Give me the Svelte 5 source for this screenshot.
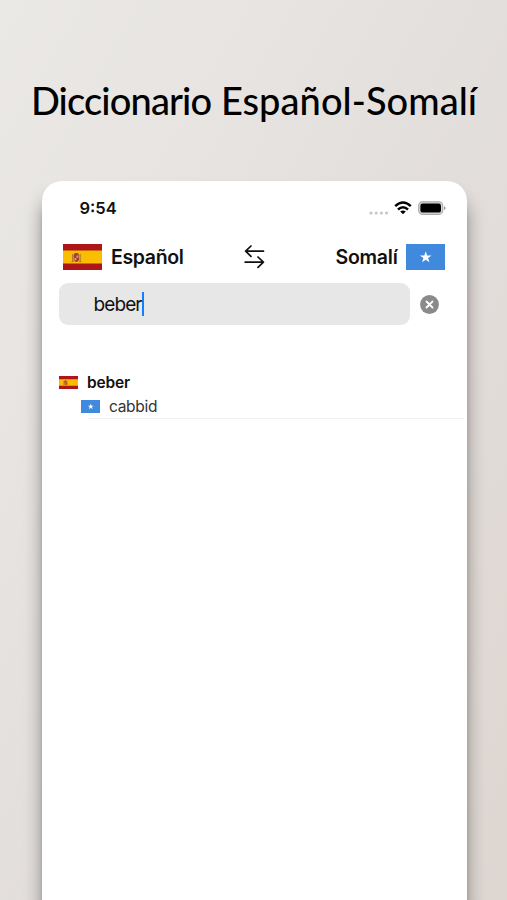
<script lang="ts">
  let query = "beber";
  const results = [{ word: "beber", translation: "cabbid" }];
</script>

{#snippet spain()}
  <svg class="flag" viewBox="0 0 39 26" preserveAspectRatio="none">
    <rect width="39" height="26" fill="#ad1519" />
    <rect y="6.5" width="39" height="13" fill="#fabd00" />
    <path d="M9 10h1v7H9zM16.5 10h1v7h-1z" fill="#a8763d" />
    <path d="M10.5 11q2.7-4 5.4 0v5q-2.7 4-5.4 0z" fill="#ad3a24" />
    <path d="M11.3 9.3h3.8v1.4h-3.8z" fill="#8c4932" />
    <path d="M13.2 11.5h2v2.3h-2zM11.2 14h2v2.2h-2z" fill="#c99a8c" />
    <path d="M8.5 17h2v1h-2zM16 17h2v1h-2z" fill="#777b78" />
  </svg>
{/snippet}

{#snippet somalia()}
  <svg class="flag" viewBox="0 0 39 26" preserveAspectRatio="none">
    <rect width="39" height="26" fill="#4189dd" />
    <path
      d="M19.5 7.2l1.4 4.2h4.4l-3.5 2.6 1.3 4.3-3.6-2.6-3.6 2.6 1.3-4.3-3.5-2.6h4.4z"
      fill="#fff"
    />
  </svg>
{/snippet}

<div class="page">
  <h1><span class="kind">Diccionario</span> <span class="pair">Español-Somalí</span></h1>

  <div class="phone">
    <div class="status">
      <span class="time">9:54</span>
      <svg class="dots" width="20" height="4" viewBox="0 0 20 4" fill="#c6c6c6">
        <circle cx="2" cy="2" r="1.6" />
        <circle cx="7.2" cy="2" r="1.6" />
        <circle cx="12.4" cy="2" r="1.6" />
        <circle cx="17.6" cy="2" r="1.6" />
      </svg>
      <svg class="wifi" width="18" height="14" viewBox="0 0 18 14">
        <g fill="none" stroke="#000" stroke-width="2.4">
          <path d="M1.2 5.2q7.8-7.2 15.6 0" />
          <path d="M4 8.5q5-4.6 10 0" />
        </g>
        <path d="M6.2 10.5q2.8-2.2 5.6 0L9 13.3z" />
      </svg>
      <svg class="battery" width="28" height="14" viewBox="0 0 28 14">
        <rect x=".7" y=".9" width="24" height="12.4" rx="3.8" fill="#ddd" stroke="#aaa" stroke-width="1.2" />
        <rect x="2.4" y="2.6" width="20.6" height="9" rx="2.2" />
        <path d="M26 5.2q1.6.4 1.6 1.9T26 9z" fill="#999" />
      </svg>
    </div>

    <header>
      {@render spain()}
      <span class="from">Español</span>
      <svg class="swap" width="21" height="24" viewBox="0 0 21 24">
        <path
          d="M19.5 6.2H2M7 1L1.6 6.2 7 11.4M1.2 17.2h18M14 12l5.4 5.2-5.4 5.2"
          fill="none"
          stroke="#111"
          stroke-width="1.7"
          stroke-linecap="round"
          stroke-linejoin="round"
        />
      </svg>
      <span class="to">Somalí</span>
      {@render somalia()}
    </header>

    <div class="search">
      <div class="field"><span>{query}</span><i class="caret"></i></div>
      <svg class="clear" width="19" height="19" viewBox="0 0 19 19">
        <circle cx="9.5" cy="9.5" r="9.4" fill="#8a8a8a" />
        <path d="M6.5 6.5l6 6m0-6l-6 6" stroke="#fff" stroke-width="1.8" stroke-linecap="round" />
      </svg>
    </div>

    <ul>
      {#each results as result}
        <li>
          <div class="word">{@render spain()}<b>{result.word}</b></div>
          <div class="translation">{@render somalia()}<span>{result.translation}</span></div>
          <hr />
        </li>
      {/each}
    </ul>
  </div>
</div>

<style>
  :global(body) {
    margin: 0;
  }
  .page {
    box-sizing: border-box;
    height: 900px;
    padding: 73px 40.5px 0 41.5px;
    overflow: hidden;
    background: linear-gradient(120deg, #ebe9e5 0%, #e3dfdd 50%, #ded6d0 100%);
    font-family: Inter, "Liberation Sans", sans-serif;
    color: #111;
  }
  h1 {
    height: 54px;
    margin: 0 -30px 54px;
    font: 500 38px/54px Lato, sans-serif;
    text-align: center;
    white-space: nowrap;
    color: #000;
  }
  .kind {
    letter-spacing: -0.85px;
  }
  .pair {
    letter-spacing: 0.05px;
  }
  .phone {
    box-sizing: border-box;
    height: 760px;
    padding: 16px 21.5px 0 17px;
    border-radius: 20px;
    background: #fff;
    box-shadow:
      0 16px 18px rgba(0, 0, 0, 0.38),
      0 18px 4px rgba(0, 0, 0, 0.1);
  }
  svg {
    display: block;
    flex: none;
  }
  .status {
    display: flex;
    align-items: center;
    height: 22px;
    margin-right: -1px;
    padding-left: 21px;
  }
  .time {
    font-size: 16.5px;
    font-weight: 600;
  }
  .dots {
    margin: 9px 5px 0 auto;
  }
  .wifi {
    margin-right: 6px;
  }
  header {
    display: flex;
    align-items: center;
    height: 27px;
    margin-top: 24px;
    padding-left: 4px;
    font-size: 19.5px;
    font-weight: 600;
    letter-spacing: -0.35px;
  }
  header .flag {
    width: 39.5px;
    height: 26px;
  }
  .from {
    width: 74px;
    margin-left: 9px;
  }
  .swap {
    margin-left: 59px;
  }
  .to {
    margin: 0 8px 0 auto;
    letter-spacing: -0.25px;
  }
  .search {
    display: flex;
    align-items: center;
    margin-top: 13px;
  }
  .field {
    display: flex;
    align-items: center;
    box-sizing: border-box;
    width: 351.5px;
    height: 42px;
    padding-left: 35px;
    border-radius: 9px;
    background: #e7e7e7;
    font-size: 19px;
    letter-spacing: -0.9px;
  }
  .caret {
    width: 2.5px;
    height: 24px;
    background: #157efb;
  }
  .clear {
    margin-left: 9.5px;
  }
  ul {
    margin: 45px -19px 0 0;
    padding: 0;
    list-style: none;
  }
  hr {
    height: 1px;
    margin: 0 0 0 29px;
    border: 0;
    background: #f1f1f1;
  }
  .word,
  .translation {
    display: flex;
    align-items: center;
    height: 24px;
    font-size: 15.5px;
    letter-spacing: -0.3px;
  }
  .word b {
    font-weight: 600;
    letter-spacing: -0.15px;
  }
  .translation {
    padding-left: 22px;
    color: #333;
  }
  li .flag {
    width: 19.5px;
    height: 13px;
    margin-right: 9px;
  }
</style>
